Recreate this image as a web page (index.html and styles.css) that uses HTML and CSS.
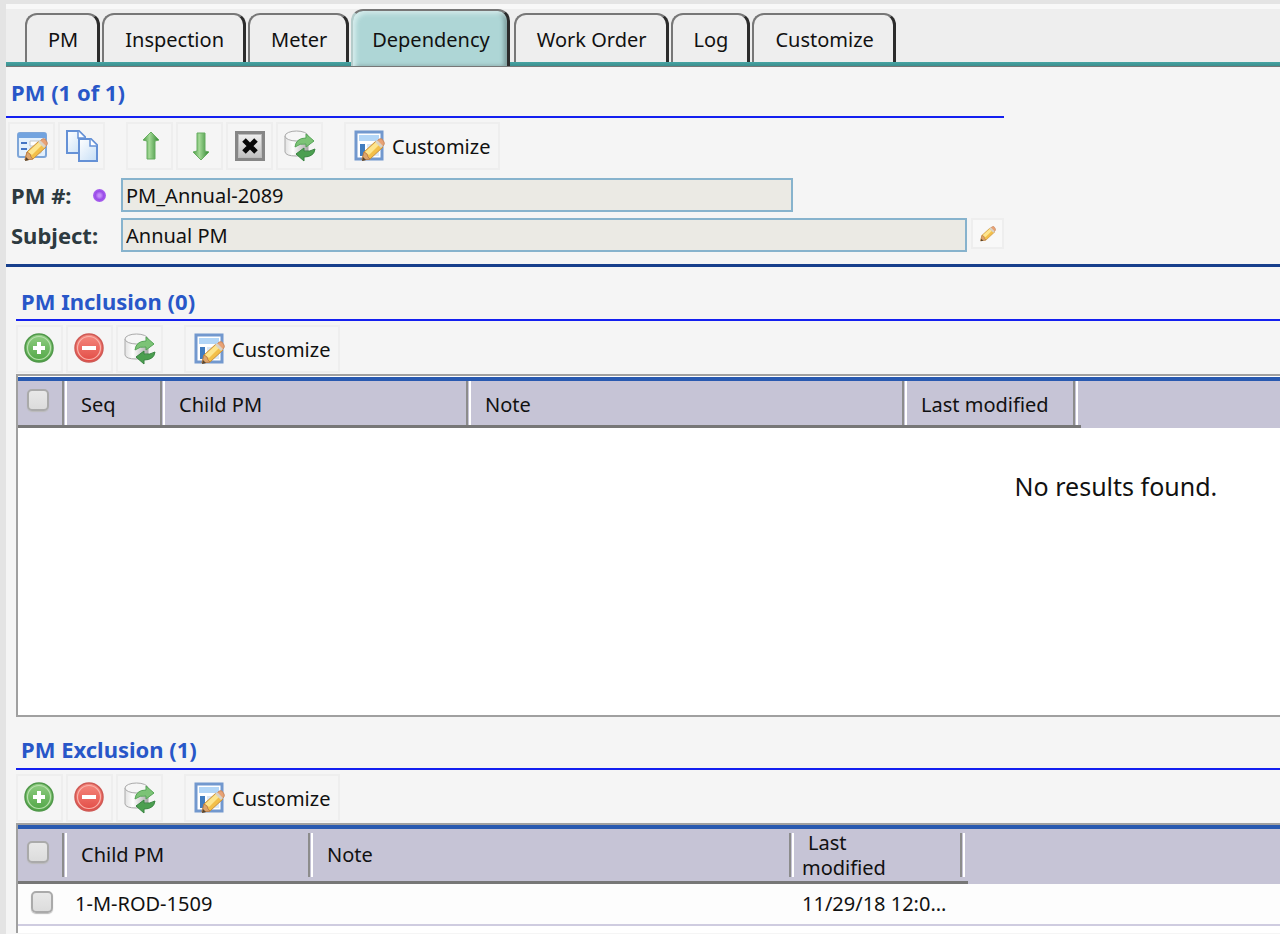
FILE: index.html
```html
<!DOCTYPE html>
<html lang="en">
<head>
    <meta charset="UTF-8">
    <meta name="viewport" content="width=device-width, initial-scale=1.0">
    <title>PM Dependency</title>
    <link rel="stylesheet" href="styles.css">
</head>
<body>
    <!-- shared icons -->
    <svg class="icon-defs" aria-hidden="true">
        <defs>
            <linearGradient id="greenArrow" x1="0" x2="1" y1="0" y2="0">
                <stop offset="0" stop-color="#4c9a44"/><stop offset=".4" stop-color="#a3d996"/><stop offset="1" stop-color="#2f8530"/>
            </linearGradient>
            <linearGradient id="page" x1="0" x2="1" y1="0" y2="1">
                <stop offset="0" stop-color="#fff"/><stop offset="1" stop-color="#c5def6"/>
            </linearGradient>
            <linearGradient id="drum" x1="0" x2="1" y1="0" y2="0">
                <stop offset="0" stop-color="#e2e2e2"/><stop offset=".35" stop-color="#fff"/><stop offset="1" stop-color="#aaa"/>
            </linearGradient>
            <linearGradient id="metal" x1="0" x2="0" y1="0" y2="1">
                <stop offset="0" stop-color="#f2f2f2"/><stop offset="1" stop-color="#bcbcbc"/>
            </linearGradient>
            <linearGradient id="greenBall" x1="0" x2="0" y1="0" y2="1">
                <stop offset="0" stop-color="#93cf85"/><stop offset="1" stop-color="#4fa544"/>
            </linearGradient>
            <linearGradient id="redBall" x1="0" x2="0" y1="0" y2="1">
                <stop offset="0" stop-color="#f58b80"/><stop offset="1" stop-color="#e24a44"/>
            </linearGradient>
        </defs>
        <symbol id="pencil" viewBox="0 0 24 24">
            <path d="M1 22l2-8L15 3l7 6L9 21z" fill="#f3bf49" stroke="#c98f3c" stroke-width="1"/>
            <path d="M4 14L15 4l3 3L8 17z" fill="#fde58e"/>
            <path d="M17 2q2-2 4-1l2 3q1 2-1 4l-1 1-6-5z" fill="#e9a274" stroke="#c98a60"/>
            <path d="M14 4l6 6 2-2-6-6z" fill="#d9d3c6"/>
            <path d="M1 22l2-8 3 2 1 3 2 2z" fill="#dda56c" stroke="#b87a48" stroke-width=".8"/>
            <path d="M1 23l1-4 3 3z" fill="#56442f"/>
        </symbol>
        <symbol id="edit" viewBox="0 0 32 32">
            <rect x="2" y="3" width="28" height="24" rx="2" fill="#e3f0fc" stroke="#7fa6d8" stroke-width="2"/>
            <path d="M2 3h28v5H2z" fill="#72a3df"/>
            <path d="M5 13h6M5 19h6" stroke="#4374c4" stroke-width="2"/>
            <path d="M14 11h13v5H14zm0 7h11v5H14z" fill="#fff" stroke="#c2c7cc"/>
            <use href="#pencil" x="8" y="8" width="24" height="24"/>
        </symbol>
        <symbol id="copy" viewBox="0 0 32 32">
            <path d="M1 1h12l6 6v16H1z" fill="url(#page)" stroke="#6591d6" stroke-width="2"/>
            <path d="M12 1v7h7" fill="#fff" stroke="#6591d6" stroke-width="1.5"/>
            <path d="M13 9h12l6 6v16H13z" fill="url(#page)" stroke="#6591d6" stroke-width="2"/>
            <path d="M24 9v7h7" fill="#fff" stroke="#6591d6" stroke-width="1.5"/>
        </symbol>
        <symbol id="up" viewBox="0 0 32 32">
            <path d="M17 2l8 8-4 1v18h-8V11l-4-1z" fill="url(#greenArrow)" stroke="#67ad60" stroke-width="1"/>
        </symbol>
        <symbol id="down" viewBox="0 0 32 32">
            <path d="M17 30l8-8-4-1V3h-8v18l-4 1z" fill="url(#greenArrow)" stroke="#67ad60" stroke-width="1"/>
        </symbol>
        <symbol id="cross" viewBox="0 0 32 32">
            <rect x="2.5" y="2.5" width="27" height="27" fill="url(#metal)" stroke="#868686" stroke-width="3"/>
            <rect x="4.5" y="4.5" width="23" height="23" fill="none" stroke="#bbb" stroke-width="1"/>
            <path d="M10 10l12 12M22 10L10 22" stroke="#080808" stroke-width="5"/>
        </symbol>
        <symbol id="refresh" viewBox="0 0 32 32">
            <path d="M1 6v16q1 4 11 4t12-4V6z" fill="url(#drum)" stroke="#a9a9a9"/>
            <ellipse cx="12.5" cy="6" rx="11.5" ry="5" fill="#f6f6f6" stroke="#aaa"/>
            <path d="M11 17q1-9 11-9V4l8 7-8 6v-3q-6-1-11 3z" fill="#7cc376" stroke="#55a556"/>
            <path d="M31 19q-1 8-11 8v4l-8-7 8-6v3q6 1 11-2z" fill="#4c9f50" stroke="#388440"/>
        </symbol>
        <symbol id="layout" viewBox="0 0 32 32">
            <rect x="2" y="2" width="26" height="27" fill="#fff" stroke="#7298ce" stroke-width="3"/>
            <path d="M5 5h20v6H5z" fill="#b3d6f7"/>
            <path d="M6 14h5v12H6z" fill="#417cbf"/>
            <path d="M13 14h12v12H13z" fill="#dbe9f7"/>
            <use href="#pencil" x="7" y="8" width="24" height="24"/>
        </symbol>
        <symbol id="add" viewBox="0 0 32 32">
            <circle cx="15" cy="15" r="14" fill="url(#greenBall)" stroke="#50984a" stroke-width="1.5"/>
            <circle cx="15" cy="15" r="11.5" fill="none" stroke="#b9e0af" stroke-width="1.2"/>
            <path d="M15 9v12M9 15h12" stroke="#fff" stroke-width="4"/>
        </symbol>
        <symbol id="remove" viewBox="0 0 32 32">
            <circle cx="15" cy="15" r="14" fill="url(#redBall)" stroke="#cf5a55" stroke-width="1.5"/>
            <circle cx="15" cy="15" r="11.5" fill="none" stroke="#f8b3ac" stroke-width="1.2"/>
            <path d="M8 15h14" stroke="#fff" stroke-width="4"/>
        </symbol>
    </svg>

    <div class="page">
        <nav class="tabs">
            <a class="tab" href="#pm">PM</a>
            <a class="tab" href="#inspection">Inspection</a>
            <a class="tab" href="#meter">Meter</a>
            <a class="tab active" href="#dependency">Dependency</a>
            <a class="tab" href="#workorder">Work Order</a>
            <a class="tab" href="#log">Log</a>
            <a class="tab" href="#customize">Customize</a>
        </nav>

        <section class="record">
            <h2>PM (1 of 1)</h2>
            <div class="toolbar">
                <button class="tool" aria-label="Edit"><svg><use href="#edit"/></svg></button>
                <button class="tool" aria-label="Copy"><svg><use href="#copy"/></svg></button>
                <button class="tool split" aria-label="Previous"><svg><use href="#up"/></svg></button>
                <button class="tool" aria-label="Next"><svg><use href="#down"/></svg></button>
                <button class="tool" aria-label="Close"><svg><use href="#cross"/></svg></button>
                <button class="tool" aria-label="Refresh"><svg><use href="#refresh"/></svg></button>
                <button class="tool wide split"><svg><use href="#layout"/></svg>Customize</button>
            </div>
            <div class="field">
                <label for="pmNumber">PM #: <span class="required"></span></label>
                <input class="short" id="pmNumber" type="text" value="PM_Annual-2089" readonly>
            </div>
            <div class="field">
                <label for="subject">Subject:</label>
                <input id="subject" type="text" value="Annual PM" readonly>
                <button class="mini" aria-label="Edit subject"><svg><use href="#pencil"/></svg></button>
            </div>
        </section>

        <section class="panel">
            <h2>PM Inclusion (0)</h2>
            <div class="toolbar">
                <button class="tool" aria-label="Add"><svg><use href="#add"/></svg></button>
                <button class="tool" aria-label="Remove"><svg><use href="#remove"/></svg></button>
                <button class="tool" aria-label="Refresh"><svg><use href="#refresh"/></svg></button>
                <button class="tool wide split"><svg><use href="#layout"/></svg>Customize</button>
            </div>
            <div class="grid inclusion">
                <table>
                    <colgroup>
                        <col class="c-check"><col class="c-seq"><col class="c-child"><col class="c-note"><col class="c-date"><col>
                    </colgroup>
                    <thead>
                        <tr>
                            <th class="check"><input type="checkbox" aria-label="Select all inclusions"></th>
                            <th>Seq</th>
                            <th>Child PM</th>
                            <th>Note</th>
                            <th class="last">Last modified</th>
                            <td class="filler"></td>
                        </tr>
                    </thead>
                </table>
                <p class="empty">No results found.</p>
            </div>
        </section>

        <section class="panel">
            <h2>PM Exclusion (1)</h2>
            <div class="toolbar">
                <button class="tool" aria-label="Add"><svg><use href="#add"/></svg></button>
                <button class="tool" aria-label="Remove"><svg><use href="#remove"/></svg></button>
                <button class="tool" aria-label="Refresh"><svg><use href="#refresh"/></svg></button>
                <button class="tool wide split"><svg><use href="#layout"/></svg>Customize</button>
            </div>
            <div class="grid exclusion">
                <table>
                    <colgroup>
                        <col class="c-check"><col class="c-child"><col class="c-note"><col class="c-date"><col>
                    </colgroup>
                    <thead>
                        <tr>
                            <th class="check"><input type="checkbox" aria-label="Select all exclusions"></th>
                            <th>Child PM</th>
                            <th>Note</th>
                            <th class="last wrap">Last<br>modified</th>
                            <td class="filler"></td>
                        </tr>
                    </thead>
                    <tbody>
                        <tr>
                            <td class="check"><input type="checkbox" aria-label="Select 1-M-ROD-1509"></td>
                            <td>1-M-ROD-1509</td>
                            <td></td>
                            <td>11/29/18 12:0...</td>
                            <td></td>
                        </tr>
                    </tbody>
                </table>
            </div>
        </section>
    </div>
</body>
</html>
```
FILE: styles.css
```css
* {
    box-sizing: border-box;
}
body {
    margin: 0;
    padding: 4px 0 0 6px;
    background: #e4e4e4;
    color: #111;
    font-family: Tahoma, "Noto Sans", sans-serif;
    font-size: 20px;
    line-height: 26px;
    overflow-x: hidden;
}
button, input {
    font-family: inherit;
    font-size: inherit;
    color: inherit;
}
.icon-defs {
    position: absolute;
    width: 0;
    height: 0;
}
.page {
    min-height: calc(100vh - 4px);
    background: #f5f5f5;
    border-top: 5px solid #f8f8f8;
}

/* tabs */
.tabs {
    display: flex;
    align-items: flex-end;
    gap: 2px;
    height: 58px;
    padding-left: 19px;
    background: linear-gradient(#46a4a3, #3d8f8e) bottom / 100% 4px no-repeat #eee;
    border-bottom: 1px solid #777;
}
.tab {
    height: 49px;
    margin-bottom: 4px;
    padding: 12px 19px 0 21px;
    border: 2px solid #777;
    border-right: 3px solid #2c2c2c;
    border-bottom: 0;
    border-radius: 12px 12px 0 0;
    background: #eee;
    color: #111;
    text-decoration: none;
    white-space: nowrap;
}
.tab.active {
    height: 57px;
    margin-bottom: 0;
    margin-right: 2px;
    padding: 16px 17px 0 19px;
    border-left-color: #b5cccb;
    background: #aed6d6;
    box-shadow: inset 3px 3px 4px #d4ecec, inset -3px 0 4px #7d9c9c;
}

h2 {
    margin: 0;
    padding: 12px 5px 11px;
    border-bottom: 2px solid #1420f0;
    color: #2857c8;
    font-size: 22px;
    line-height: 26px;
}

/* toolbars */
.toolbar {
    display: flex;
    gap: 3px;
}
.tool {
    display: flex;
    align-items: center;
    justify-content: center;
    width: 47px;
    height: 48px;
    padding: 0;
    border: 2px solid #eee;
    background: #f5f5f5;
    cursor: pointer;
}
.tool svg {
    width: 32px;
    height: 32px;
}
.tool.split {
    margin-left: 18px;
}
.tool.wide {
    width: auto;
    padding: 0 8px;
    gap: 6px;
}

/* record header */
.record {
    border-bottom: 3px solid #173f8c;
    padding-bottom: 12px;
}
.record h2 {
    max-width: 998px;
}
.record .toolbar {
    padding: 4px 2px 8px;
}
.field {
    display: flex;
    max-width: 998px;
    height: 34px;
    margin-bottom: 6px;
}
.field:last-child {
    margin-bottom: 0;
}
.field label {
    display: flex;
    align-items: center;
    justify-content: space-between;
    width: 115px;
    padding: 0 15px 0 5px;
    color: #2d3a40;
    font-size: 22px;
    font-weight: bold;
}
.required {
    width: 13px;
    height: 13px;
    border-radius: 50%;
    background: radial-gradient(#c58cfa 15%, #9a4ce8 45%, #b87af5);
}
.field input {
    flex: 1;
    min-width: 0;
    padding: 0 3px;
    border: 2px solid #87b3cd;
    background: #ebeae4;
}
.field input.short {
    flex: 0 1 672px;
}
.mini {
    display: flex;
    align-items: center;
    justify-content: center;
    width: 33px;
    height: 31px;
    margin-left: 4px;
    padding: 0;
    border: 2px solid #eee;
    background: #f8f8f8;
}
.mini svg {
    width: 16px;
    height: 16px;
}

/* list panels */
.panel {
    padding-left: 10px;
}
.panel h2 {
    padding: 21px 5px 5px;
}
.panel + .panel h2 {
    padding-top: 19px;
    padding-bottom: 6px;
}
.panel .toolbar {
    padding: 4px 0 1px;
}
.grid {
    overflow: hidden;
    border: 2px solid #a0a0a0;
    border-right: 0;
    background: #fff;
}
.inclusion {
    height: 343px;
    padding-top: 1px;
}
.exclusion {
    min-height: 110px;
    border-bottom: 0;
}
table {
    width: 100%;
    table-layout: fixed;
    border-spacing: 0;
    border-top: 4px solid #2859b0;
}
.c-check {
    width: 49px;
}
.c-seq {
    width: 98px;
}
.inclusion .c-child {
    width: 306px;
}
.inclusion .c-note {
    width: 436px;
}
.exclusion .c-child {
    width: 246px;
}
.exclusion .c-note {
    width: 481px;
}
.c-date {
    width: 174px;
}
th {
    position: relative;
    height: 47px;
    padding: 3px 8px 0 14px;
    border-bottom: 3px solid #777;
    background: #c6c4d6;
    font-weight: normal;
    text-align: left;
}
/* column divider: grey line with a white edge */
th::after {
    content: "";
    position: absolute;
    top: 0;
    right: 0;
    bottom: 0;
    width: 5px;
    background: linear-gradient(to right, #8c8c8c 2px, #c6c4d6 2px, #c6c4d6 3px, #fff 3px);
}
th.last::after {
    right: 3px;
}
.exclusion th {
    height: 55px;
    padding-top: 0;
}
.exclusion th::after {
    top: 4px;
    bottom: 4px;
}
.exclusion th.wrap {
    padding-left: 8px;
    text-indent: 6px;
    line-height: 25px;
}
.filler {
    background: #c6c4d6;
}
tbody td {
    height: 42px;
    padding: 0 8px;
    border-bottom: 2px solid #cfcce0;
    background: #fdfdfd;
    white-space: nowrap;
}
th.check, .exclusion th.check {
    padding: 0 0 6px 9px;
}
td.check {
    padding: 0 0 4px 13px;
}
input[type="checkbox"] {
    appearance: none;
    display: block;
    width: 22px;
    height: 22px;
    margin: 0;
    border: 2px solid #aaa;
    border-radius: 5px;
    background: linear-gradient(#e8e8e8, #dcdcdc);
    box-shadow: 0 1px 1px #bbb;
}
.empty {
    width: 174%;
    margin: 0;
    padding-top: 42px;
    font-size: 25px;
    line-height: 32px;
    text-align: center;
}
```
